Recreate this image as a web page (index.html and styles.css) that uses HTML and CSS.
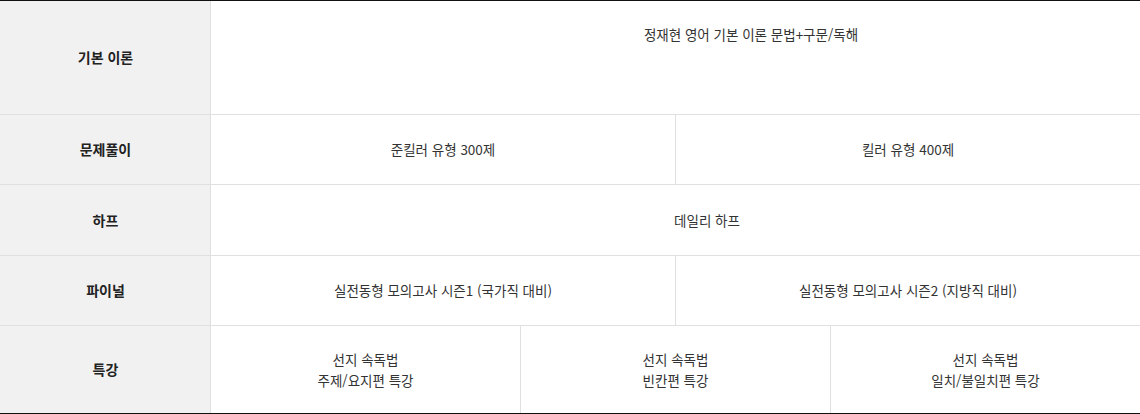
FILE: index.html
```html
<!DOCTYPE html>
<html lang="ko">
<head>
<meta charset="utf-8">
<link rel="stylesheet" href="styles.css">
</head>
<body>
<div class="table">
  <div class="row r1">
    <div class="th">기본 이론</div>
    <div class="cells"><div class="td top">정재현 영어 기본 이론 문법+구문/독해</div></div>
  </div>
  <div class="row r2">
    <div class="th">문제풀이</div>
    <div class="cells"><div class="td">준킬러 유형 300제</div><div class="td">킬러 유형 400제</div></div>
  </div>
  <div class="row r3">
    <div class="th">하프</div>
    <div class="cells"><div class="td shift">데일리 하프</div></div>
  </div>
  <div class="row r4">
    <div class="th">파이널</div>
    <div class="cells"><div class="td">실전동형 모의고사 시즌1 (국가직 대비)</div><div class="td">실전동형 모의고사 시즌2 (지방직 대비)</div></div>
  </div>
  <div class="row r5">
    <div class="th">특강</div>
    <div class="cells"><div class="td">선지 속독법<br>주제/요지편 특강</div><div class="td">선지 속독법<br>빈칸편 특강</div><div class="td">선지 속독법<br>일치/불일치편 특강</div></div>
  </div>
</div>
</body>
</html>
```
FILE: styles.css
```css
* { box-sizing: border-box; }
html, body { margin: 0; padding: 0; background: #fff; }
body {
  font-family: "Noto Sans CJK KR", "Noto Sans", sans-serif;
  font-size: 13.5px;
  color: #333;
  width: 1140px;
}
.table {
  border-top: 1px solid #111;
  border-bottom: 1px solid #111;
}
.row {
  display: flex;
  border-bottom: 1px solid #e0e0e0;
}
.row:last-child { border-bottom: none; }
.r1 { height: 114px; }
.r2 { height: 70px; }
.r3 { height: 71px; }
.r4 { height: 70px; }
.r5 { height: 87px; }
.th {
  width: 211px;
  flex: none;
  background: #f1f1f1;
  border-right: 1px solid #e0e0e0;
  display: flex;
  align-items: center;
  justify-content: center;
  font-weight: bold;
  color: #222;
  font-size: 14px;
  padding-left: 1px;
  padding-bottom: 1px;
}
.cells {
  flex: 1;
  display: flex;
}
.td {
  flex: 1;
  display: flex;
  align-items: center;
  justify-content: center;
  text-align: center;
  line-height: 21px;
}
.td + .td { border-left: 1px solid #e0e0e0; }
.td.top {
  align-items: flex-start;
  padding-top: 23px;
  padding-left: 151px;
}
.td.shift {
  padding-left: 63px;
}
```
